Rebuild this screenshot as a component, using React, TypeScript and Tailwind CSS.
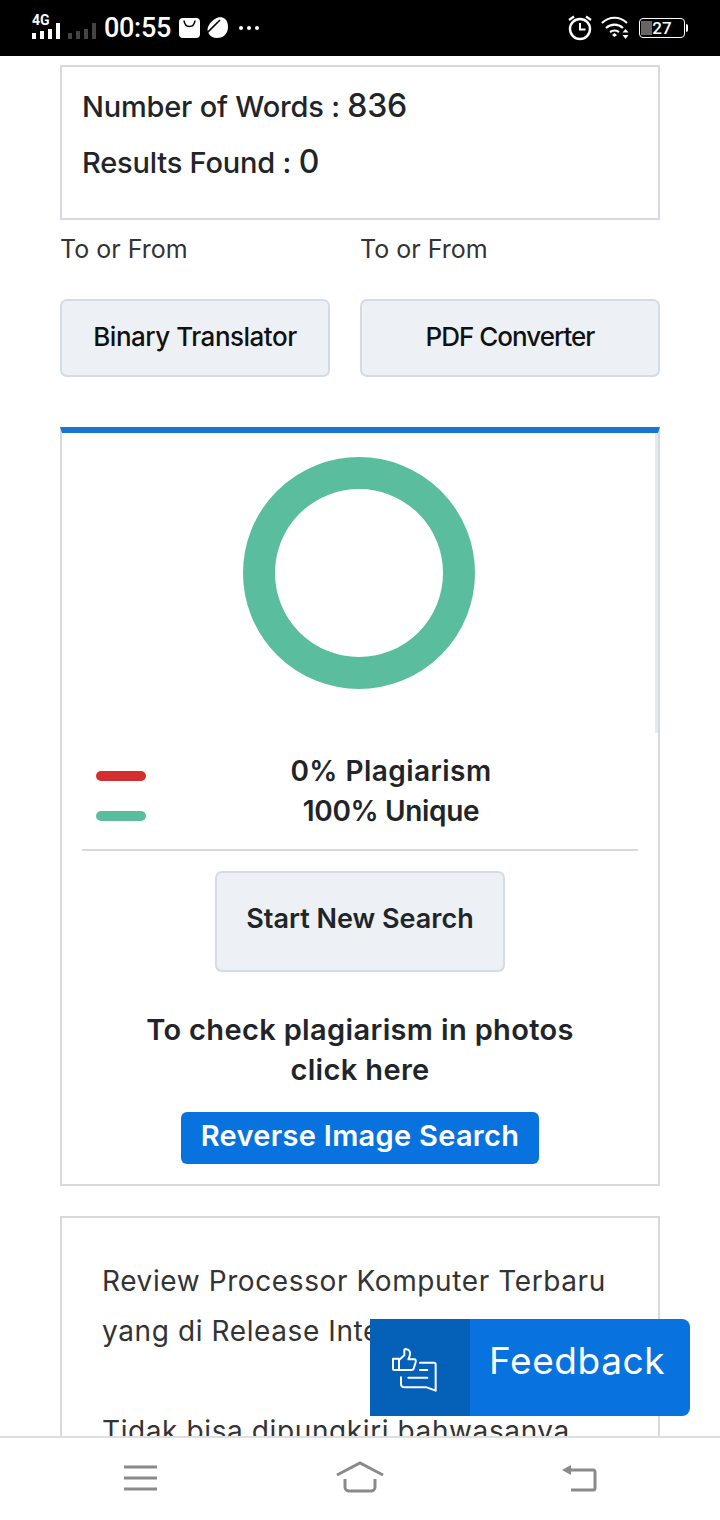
import React from "react";

function StatusBar() {
  return (
    <div className="h-14 shrink-0 bg-black flex items-center justify-between pl-8 pr-8 text-white">
      <div className="flex items-center">
        <svg width="66" height="28" viewBox="0 0 66 28" className="mr-[6px] overflow-visible">
          <text x="0" y="11" fontSize="14" fontWeight="700" fill="#fff" fontFamily="Roboto, sans-serif">4G</text>
          <g fill="#fff">
            <rect x="0" y="19" width="4" height="6" />
            <rect x="8" y="17" width="4" height="8" />
            <rect x="16" y="15" width="4" height="10" />
            <rect x="24" y="9" width="4" height="16" />
          </g>
          <g fill="#444">
            <rect x="36" y="19" width="4" height="6" />
            <rect x="44" y="17" width="4" height="8" />
            <rect x="52" y="15" width="4" height="10" />
            <rect x="60" y="9" width="4" height="16" />
          </g>
        </svg>
        <span className="font-['Roboto',sans-serif] text-[27px] font-medium leading-none tracking-[-0.3px]">00:55</span>
        <svg width="22" height="22" viewBox="0 0 22 22" className="ml-[8px]">
          <rect x="0" y="1" width="21" height="20" rx="4" fill="#fff" />
          <path d="M5 3.500c.5 4 2.500 6 5.500 6s5-2 5.500-6" fill="none" stroke="#000" strokeWidth="1.600" />
        </svg>
        <svg width="22" height="24" viewBox="0 0 22 24" className="ml-[6px]">
          <path d="M8 3C12 0 21 0 21 11c0 8-6 11-11 11-4 0-7-2-8-4-2-3-2-6 0-9 1-2 4-5 6-6z" fill="#fff" />
          <path d="M0 17C4 13 8 9 13 4" fill="none" stroke="#000" strokeWidth="1.600" />
        </svg>
        <div className="ml-[10px] flex gap-[4px]">
          <span className="w-1 h-1 rounded-full bg-white" />
          <span className="w-1 h-1 rounded-full bg-white" />
          <span className="w-1 h-1 rounded-full bg-white" />
        </div>
      </div>
      <div className="flex items-center">
        <svg width="24" height="26" viewBox="0 0 24 26" className="mr-[9px]">
          <circle cx="12" cy="14" r="10" fill="none" stroke="#fff" strokeWidth="2.400" />
          <path d="M12 8v6.500h5.500" fill="none" stroke="#fff" strokeWidth="2" />
          <path d="M1 5l5-3.500M23 5l-5-3.500" fill="none" stroke="#fff" strokeWidth="2.200" />
        </svg>
        <svg width="30" height="24" viewBox="0 0 30 24" className="mr-[8px]">
          <path d="M1 7c7-7 18-7 25 0M5 12c5-4.500 12-4.500 17 0M9 16c3-2 6-2 9 0" fill="none" stroke="#fff" strokeWidth="2.200" />
          <path d="M11 19l2.500-2 2.500 2-2.500 2z" fill="#fff" />
          <path d="M24.500 13l3 3.500h-6zM24.500 23l3-4h-6z" fill="#fff" />
        </svg>
        <div className="relative w-[46px] h-[20px] rounded-[4px] border border-white overflow-hidden flex items-center justify-center">
          <div className="absolute left-[1px] top-[2px] bottom-[2px] w-[11px] bg-[#666]" />
          <span className="relative font-['Roboto',sans-serif] text-[17px] font-medium leading-none">27</span>
        </div>
        <div className="w-[2px] h-[8px] bg-white rounded-r ml-[1px]" />
      </div>
    </div>
  );
}

function Legend() {
  return (
    <div className="flex items-center mx-[20px] pb-[18px] border-b-2 border-[#d3dae0]">
      <div className="w-[86px] shrink-0 pl-[14px] pt-[10px] flex flex-col gap-[30px]">
        <span className="block w-[50px] h-[10px] rounded-full bg-[#d32f2f]" />
        <span className="block w-[50px] h-[10px] rounded-full bg-[#5abd9e]" />
      </div>
      <div className="flex-1 text-center text-[28px] leading-[40px] font-semibold text-[#212529]">
        <div className="pr-[24px] tracking-[0.45px]">0% Plagiarism</div>
        <div className="pr-[24px] tracking-[-0.35px]">100% Unique</div>
      </div>
    </div>
  );
}

export default function App() {
  return (
    <div className="relative w-[720px] h-[1520px] bg-white flex flex-col overflow-hidden font-['Inter',sans-serif] text-[#212529]">
      <StatusBar />

      <div className="flex-1 overflow-hidden px-[60px] pt-[9px]">
        <div className="h-[155px] border-2 border-[#d6d9dd] px-[20px] pt-[12px] text-[29px] leading-[56px] font-medium tracking-[-0.2px]">
          <div className="h-[56px]">
            Number of Words : <span className="text-[32px] leading-none">836</span>
          </div>
          <div className="h-[56px]">
            Results Found : <span className="text-[32px] leading-none">0</span>
          </div>
        </div>

        <div className="flex mt-[9px] text-[25px] leading-[40px] text-[#333]">
          <div className="w-[300px]">To or From</div>
          <div>To or From</div>
        </div>

        <div className="flex justify-between mt-[30px]">
          <div className="w-[270px] h-[78px] pb-[4px] flex items-center justify-center rounded-[7px] border-2 border-[#d3dce4] bg-[#edf1f5] text-[26px] font-medium tracking-[-0.5px] text-[#111]">
            Binary Translator
          </div>
          <div className="w-[300px] h-[78px] pb-[4px] flex items-center justify-center rounded-[7px] border-2 border-[#d3dce4] bg-[#edf1f5] text-[26px] font-medium tracking-[-1px] text-[#111]">
            PDF Converter
          </div>
        </div>

        <div className="relative mt-[50px] h-[759px] border-x-2 border-b-2 border-t-[6px] border-x-[#d6d9dd] border-b-[#d6d9dd] border-t-[#1976d2]">
          <div className="absolute right-[0px] top-0 w-[3px] h-[300px] bg-[#e6e8eb]" />
          <div className="flex justify-center pt-[24px] pr-[2px]">
            <div className="w-[232px] h-[232px] rounded-full border-[32px] border-[#5abd9e]" />
          </div>
          <div className="mt-[62px]">
            <Legend />
          </div>
          <div className="flex justify-center mt-[20px]">
            <div className="w-[290px] h-[101px] pb-[4px] flex items-center justify-center rounded-[7px] border-2 border-[#d3dce4] bg-[#edf1f5] text-[27px] font-semibold">
              Start New Search
            </div>
          </div>
          <div className="mt-[38px] text-center text-[29px] leading-[40px] font-semibold tracking-[0.35px]">
            <div>To check plagiarism in photos</div>
            <div>click here</div>
          </div>
          <div className="flex justify-center mt-[22px]">
            <div className="w-[358px] h-[52px] pb-[4px] flex items-center justify-center rounded-[6px] bg-[#0872de] text-white text-[29px] font-semibold tracking-[0.3px]">
              Reverse Image Search
            </div>
          </div>
        </div>

        <div className="mt-[30px] h-[300px] border-2 border-[#d6d9dd] px-[40px] pt-[38px] text-[28px] leading-[50px] tracking-[0.6px] text-[#333]">
          <div>Review Processor Komputer Terbaru</div>
          <div>yang di Release Intel</div>
          <div className="mt-[50px]">Tidak bisa dipungkiri bahwasanya</div>
        </div>
      </div>

      <div className="h-[84px] shrink-0 bg-white border-t-2 border-[#dedede] flex items-center justify-between pl-[124px] pr-[123px] pb-[3px]">
        <svg width="34" height="28" viewBox="0 0 34 28">
          <path d="M0 3h33M0 14h33M0 25h33" stroke="#8a8a8a" strokeWidth="3" />
        </svg>
        <svg width="50" height="34" viewBox="0 0 50 34">
          <path d="M2 14L25 2l23 12" fill="none" stroke="#8a8a8a" strokeWidth="3" />
          <path d="M10 18v8a4 4 0 0 0 4 4h22a4 4 0 0 0 4-4v-8" fill="none" stroke="#8a8a8a" strokeWidth="3" />
        </svg>
        <svg width="36" height="30" viewBox="0 0 36 30">
          <path d="M8 7h24a2 2 0 0 1 2 2v16a2 2 0 0 1-2 2H10" fill="none" stroke="#8a8a8a" strokeWidth="3" />
          <path d="M1 7l9-5v10z" fill="#8a8a8a" />
        </svg>
      </div>

      <div className="absolute left-[370px] top-[1319px] w-[320px] h-[97px] flex rounded-r-[8px] overflow-hidden bg-[#0872de] text-white">
        <div className="w-[100px] bg-[#0560b8] flex items-center justify-center pr-[10px] pt-[5px]">
          <svg width="60" height="60" viewBox="0 0 180 180" fill="none" stroke="#fff" strokeWidth="6" strokeLinejoin="round" strokeLinecap="round">
            <path d="M24 56h18v34H28a4 4 0 0 1-4-4z" />
            <path d="M42 60L58 46V30c0-4 12-4 16 4 3 8 0 16-4 24h18c4 0 5 4 4 8l-6 20c-1 3-3 4-6 4H42" />
            <path d="M105 68h42a5 5 0 0 1 5 5v79l-27-10H60c-7 0-12-4-12-10v-20" />
            <path d="M105 90h22M70 113h57" />
          </svg>
        </div>
        <div className="flex-1 flex items-center pl-[19px] pb-[14px] text-[37px] tracking-[0.6px]">Feedback</div>
      </div>
    </div>
  );
}
